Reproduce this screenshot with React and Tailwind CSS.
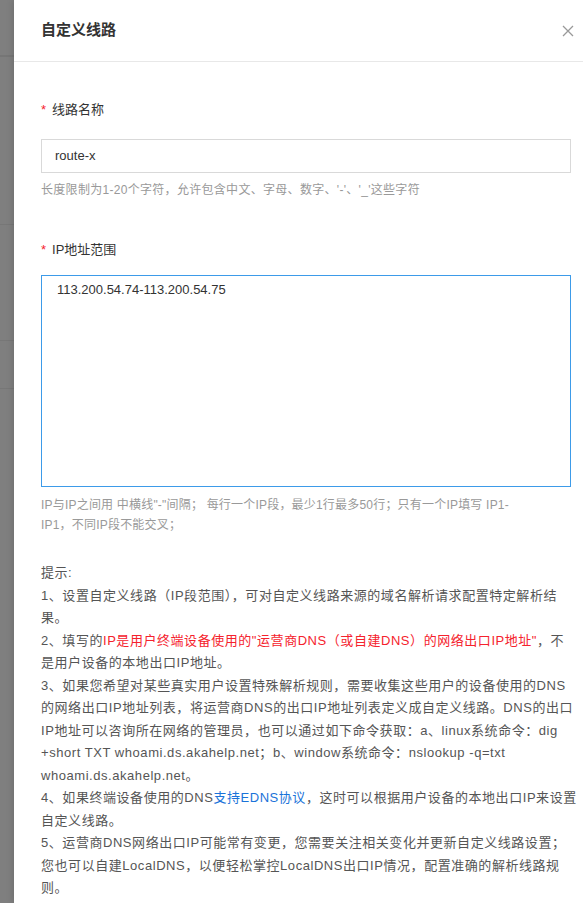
export default function App() {
  return (
    <div
      className="flex min-h-[903px] w-[583px] overflow-hidden bg-white text-[#333]"
      style={{ fontFamily: '"Liberation Sans", "Noto Sans CJK SC", sans-serif' }}
    >
      <Backdrop />
      <div className="flex-1 bg-white shadow-[-2px_0_6px_rgba(0,0,0,0.12)]">
        <div className="flex h-[62px] items-center justify-between border-b border-[#e8e8e8] pl-[27px] pr-[9px]">
          <h1 className="text-[15px] font-bold text-[#333]">自定义线路</h1>
          <svg width="12" height="12" viewBox="0 0 12 12" className="text-[#999]">
            <path d="M1 1L11 11M11 1L1 11" stroke="currentColor" strokeWidth="1.3" />
          </svg>
        </div>

        <div className="w-[557px] pl-[27px]">
          <Label className="mt-[38px]">线路名称</Label>
          <div className="mt-[19px] flex h-[34px] w-[530px] items-center border border-[#d9d9d9] px-[13px] text-[13px] text-[#333]">
            route-x
          </div>
          <p className="mt-[7px] text-[12px] leading-[20px] tracking-[0.3px] text-[#999]">
            长度限制为1-20个字符，允许包含中文、字母、数字、'-'、'_'这些字符
          </p>

          <Label className="mt-[40px]">IP地址范围</Label>
          <div className="mt-[15px] h-[212px] w-[530px] border border-[#3d9be9] px-[15px] pt-[4px] text-[13px] leading-[20px] text-[#333]">
            113.200.54.74-113.200.54.75
          </div>
          <div className="mt-[8px] text-[12px] leading-[20px] tracking-[0.2px] text-[#999]">
            <div className="whitespace-nowrap">IP与IP之间用 中横线"-"间隔； 每行一个IP段，最少1行最多50行；只有一个IP填写 IP1-</div>
            <div className="whitespace-nowrap">IP1，不同IP段不能交叉；</div>
          </div>

          <div className="mt-[27px] text-[13px] leading-[22.5px] tracking-[0.55px] text-[#555]">
            {tips.map((line, i) => (
              <div key={i} className="whitespace-nowrap">
                {line}
              </div>
            ))}
          </div>
        </div>
      </div>
    </div>
  );
}

const tips = [
  "提示:",
  "1、设置自定义线路（IP段范围），可对自定义线路来源的域名解析请求配置特定解析结",
  "果。",
  <>
    2、填写的<span className="text-[#f5222d]">IP是用户终端设备使用的"运营商DNS（或自建DNS）的网络出口IP地址"</span>，不
  </>,
  "是用户设备的本地出口IP地址。",
  "3、如果您希望对某些真实用户设置特殊解析规则，需要收集这些用户的设备使用的DNS",
  "的网络出口IP地址列表，将运营商DNS的出口IP地址列表定义成自定义线路。DNS的出口",
  "IP地址可以咨询所在网络的管理员，也可以通过如下命令获取：a、linux系统命令：dig",
  "+short TXT whoami.ds.akahelp.net；b、window系统命令：nslookup -q=txt",
  "whoami.ds.akahelp.net。",
  <>
    4、如果终端设备使用的DNS<span className="text-[#1a73d9]">支持EDNS协议</span>，这时可以根据用户设备的本地出口IP来设置
  </>,
  "自定义线路。",
  "5、运营商DNS网络出口IP可能常有变更，您需要关注相关变化并更新自定义线路设置；",
  "您也可以自建LocalDNS，以便轻松掌控LocalDNS出口IP情况，配置准确的解析线路规",
  "则。",
];

function Label({ children, className }) {
  return (
    <div className={`flex items-center text-[13px] leading-[20px] text-[#333] ${className}`}>
      <span className="mr-[6px] text-[#f5222d]">*</span>
      {children}
    </div>
  );
}

function Backdrop() {
  return (
    <div className="flex w-[14px] shrink-0 flex-col bg-[#7f7f7f]">
      <div className="h-[57px] shrink-0 border-b-2 border-[#767676]" />
      <div className="h-[168px] shrink-0 border-b border-[#777]" />
      <div className="h-[116px] shrink-0 border-b border-[#777]" />
      <div className="h-[48px] shrink-0 border-b border-[#777]" />
    </div>
  );
}
